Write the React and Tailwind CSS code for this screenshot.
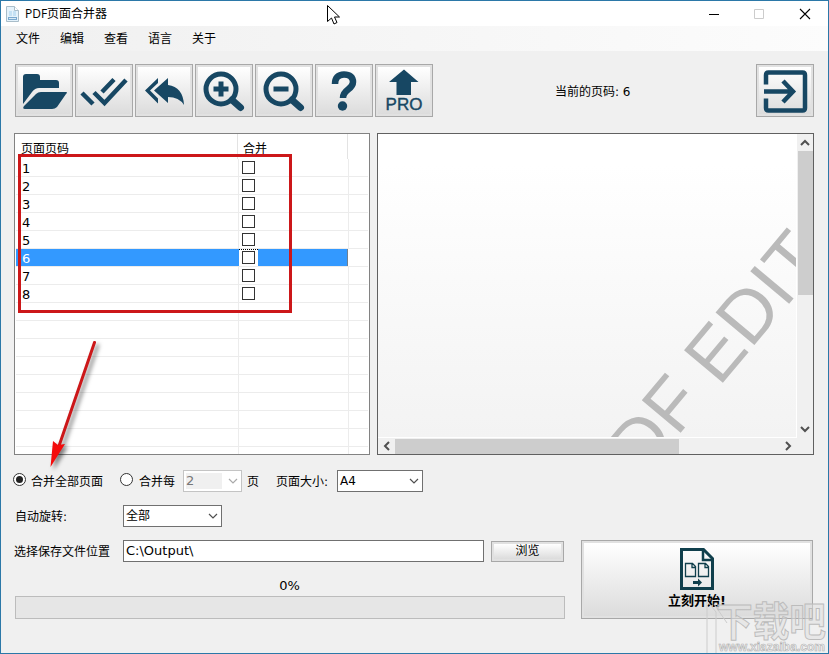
import { useState } from 'react';

const pages = [1, 2, 3, 4, 5, 6, 7, 8];
const menus = ['文件', '编辑', '查看', '语言', '关于'];

const NAVY = '#174763';

const Icon = ({ children }) => (
  <svg width="58" height="53" viewBox="0 0 58 53" fill={NAVY} className="block">
    {children}
  </svg>
);

const OpenIcon = () => (
  <Icon>
    <path d="M8 13q0-3 3-3h11q3 0 3 3v3h16q3 0 3 3v5H24q-4 0-7 4L8 40z" />
    <path d="M51 28H26q-3 0-5 2L9 42q-2 3 1 3h27q3 0 5-2l9-13q2-2 0-2z" />
  </Icon>
);

const CheckAllIcon = () => (
  <Icon>
    <path
      d="M7 29l11 11M19 28.500l10.500 10.500 21.500-23M27 28l12-12.500"
      fill="none"
      stroke={NAVY}
      strokeWidth="4.500"
    />
  </Icon>
);

const ReplyAllIcon = () => (
  <Icon>
    <path d="M23 14v5l-8 7.500 8 8v5L10 26.500z" />
    <path d="M33 14v7q15 2 16 20-5-8-16-8v6L19 26.500z" />
  </Icon>
);

const Magnifier = () => (
  <>
    <circle cx="26" cy="25" r="15" fill="none" stroke={NAVY} strokeWidth="5" />
    <path d="M37 36l8.500 7.500" stroke={NAVY} strokeWidth="7" strokeLinecap="round" />
    <path d="M18.500 22.500h15v5h-15z" />
  </>
);

const ZoomInIcon = () => (
  <Icon>
    <Magnifier />
    <path d="M23.500 17.500h5v15h-5z" />
  </Icon>
);

const ZoomOutIcon = () => (
  <Icon>
    <Magnifier />
  </Icon>
);

const HelpIcon = () => (
  <Icon>
    <path
      d="M20 20c0-6 3-9.500 9-9.500s9 3 9 7.500c0 8-10 7-10 16"
      fill="none"
      stroke={NAVY}
      strokeWidth="6.500"
    />
    <circle cx="27.500" cy="42" r="4.700" />
  </Icon>
);

const ProIcon = () => (
  <Icon>
    <path d="M29 5.500L43.500 18H36v13H21.500V18H14z" />
    <text x="29" y="46" textAnchor="middle" fontSize="17" fontFamily="Liberation Sans, sans-serif" textLength="37" stroke={NAVY} strokeWidth=".4">
      PRO
    </text>
  </Icon>
);

const ExitIcon = () => (
  <Icon>
    <path
      d="M10 20.500V11q0-2.500 2.500-2.500h34Q49 8.500 49 11v33q0 2.500-2.500 2.500h-34Q10 46.500 10 44V34.500"
      fill="none"
      stroke={NAVY}
      strokeWidth="4.500"
    />
    <path d="M8 27.500h29M27 17l10 10.500L27 38" fill="none" stroke={NAVY} strokeWidth="4.500" />
  </Icon>
);

const ToolButton = ({ children }) => (
  <button className="h-[53px] w-[58px] shrink-0 border border-[#a8a8a8] bg-[#e1e1e1] p-[2px]">
    <span className="flex h-full w-full items-center justify-center bg-linear-to-b from-white to-[#dcdcdc]">
      <span className="-m-2 shrink-0">{children}</span>
    </span>
  </button>
);

const Chevron = ({ direction = 'down', color = '#505050', width = 1.2 }) => {
  const paths = {
    down: 'M1 3l4 4 4-4',
    up: 'M1 7l4-4 4 4',
    left: 'M7 1L3 5l4 4',
    right: 'M3 1l4 4-4 4',
  };
  return (
    <svg width="10" height="10" viewBox="0 0 10 10" fill="none" stroke={color} strokeWidth={width} className="shrink-0">
      <path d={paths[direction]} />
    </svg>
  );
};

const Select = ({ value, className }) => (
  <div className={`flex h-[22px] items-center justify-between border border-[#707070] bg-white pr-[3px] pl-[2px] ${className}`}>
    <span className="whitespace-nowrap">{value}</span>
    <Chevron />
  </div>
);

const TitleBar = () => (
  <header className="flex h-[25px] shrink-0 items-center bg-white">
    <svg width="13" height="16" viewBox="0 0 13 16" className="ml-[5px]">
      <path d="M.5.5h8l4 4v11H.5z" fill="#e4f2fb" stroke="#a9bdc9" />
      <path d="M8.500.5v4h4" fill="#fff" stroke="#a9bdc9" />
      <path d="M3 5h3v5H3zM7 5h3v5H7z" fill="#c4e1f4" />
      <path d="M2 11h9v3H2z" fill="#7aa9cf" />
      <path d="M3 12.500h7" stroke="#d7e9f5" />
    </svg>
    <h1 className="ml-[6px] font-['Open_Sans','Noto_Sans_CJK_SC',sans-serif] text-[12px] leading-4">PDF页面合并器</h1>
    <svg width="102" height="12" viewBox="0 0 102 12" fill="none" className="mr-[17px] ml-auto">
      <path d="M0 6.500h10" stroke="#000" />
      <path d="M45.500 1.500h9v9h-9z" stroke="#ccc" />
      <path d="M91 1l10 10M101 1L91 11" stroke="#000" strokeWidth="1.100" />
    </svg>
  </header>
);

const PageTable = ({ selected, onSelect }) => (
  <section className="flex h-[322px] w-[356px] shrink-0 flex-col overflow-hidden border border-[#828282] bg-white pl-px">
    <div className="flex h-[25px] shrink-0">
      <div className="w-[222px] border-r border-[#e3e3e3] pt-[6px] pl-[5px] leading-[18px]">页面页码</div>
      <div className="w-[110px] border-r border-[#e3e3e3] pt-[6px] pl-[5px] leading-[18px]">合并</div>
    </div>
    {Array.from({ length: 17 }, (_, i) => {
      const page = pages[i];
      const active = page === selected;
      return (
        <div key={i} onClick={() => page && onSelect(page)} className="mr-px flex h-[18px] shrink-0 border-b border-[#ececec]">
          <div
            className={`w-[223px] border-r pl-[6px] text-[13px] leading-[20px] ${
              active ? 'border-[#3399ff] bg-[#3399ff] text-white' : 'border-[#ececec]'
            }`}
          >
            {page}
          </div>
          <div className={`border-r ${active ? 'w-[109px] border-[#708090] bg-[#3399ff]' : 'w-[110px] border-[#ececec]'}`}>
            {page && (
              <div className={`flex h-full w-[19px] pl-[3px] ${active ? 'border-t border-dotted border-black bg-white pt-px' : 'pt-[2px]'}`}>
                <span className="h-[13px] w-[13px] border border-[#333] bg-white" />
              </div>
            )}
          </div>
        </div>
      );
    })}
  </section>
);

const Preview = () => (
  <section className="ml-[7px] grid h-[322px] w-[437px] grid-cols-[419px_16px] grid-rows-[304px_16px] border border-[#606060] bg-[#f0f0f0]">
    <div className="overflow-hidden border-r border-b border-white bg-linear-to-b from-white from-10% to-[#f3f3f3]">
      <svg width="418" height="303" viewBox="0 0 418 303">
        <text
          transform="translate(233 382) rotate(-50)"
          fontSize="73.7"
          fontFamily="Liberation Sans, sans-serif"
          fill="#bababa"
        >
          PDF EDITOR
        </text>
      </svg>
    </div>
    <div className="flex flex-col items-center">
      <div className="flex h-[17px] items-center">
        <Chevron direction="up" width={2} />
      </div>
      <div className="h-[144px] w-[15px] bg-[#cdcdcd]" />
      <div className="mt-auto flex h-[19px] items-center">
        <Chevron width={2} />
      </div>
    </div>
    <div className="flex items-center">
      <div className="flex w-[17px] justify-center">
        <Chevron direction="left" width={2} />
      </div>
      <div className="h-[15px] w-[284px] bg-[#cdcdcd]" />
      <div className="ml-auto flex w-[19px] justify-center">
        <Chevron direction="right" width={2} />
      </div>
    </div>
    <div />
  </section>
);

const MergeIcon = () => (
  <svg width="34" height="42" viewBox="0 0 34 42" fill="none" stroke="#103f4c">
    <path d="M1.500 1.500h22l9 9v30h-31z" strokeWidth="3" />
    <path d="M23 2v10h10" strokeWidth="2.500" />
    <path d="M5.500 15.500h7l3 3v10h-10zM12 15.500v4h3.500M18.500 15.500h7l3 3v10h-10zM25 15.500v4h3.500" strokeWidth="1.300" />
    <path d="M13 33h5v-2.500l4 4-4 4V36h-5z" fill="#103f4c" stroke="none" />
  </svg>
);

const Radio = ({ checked }) => (
  <span className="mb-[3px] flex h-[13px] w-[13px] shrink-0 items-center justify-center rounded-full border border-[#333] bg-white">
    {checked && <span className="h-[7px] w-[7px] rounded-full bg-[#222]" />}
  </span>
);

const SiteMark = () => (
  <svg width="123" height="58" viewBox="0 0 123 58" className="pointer-events-none absolute -right-px -bottom-px">
    <path d="M1 5l9 11v42M1 5v53M8 8l13 19" fill="none" stroke="#cccccc" />
    <text
      x="10"
      y="40"
      fontSize="40"
      fontWeight="700"
      fontFamily="Noto Sans CJK SC, sans-serif"
      fill="#dedede"
      fillOpacity=".5"
      stroke="#bcbcbc"
      textLength="110"
      lengthAdjust="spacingAndGlyphs"
    >
      下载吧
    </text>
    <text
      x="13"
      y="55"
      fontSize="12"
      fontWeight="700"
      fontFamily="Liberation Sans, sans-serif"
      fill="#f4f4f4"
      stroke="#b0b0b0"
      strokeWidth=".6"
      textLength="106"
      lengthAdjust="spacingAndGlyphs"
    >
      www.xiazaiba.com
    </text>
  </svg>
);

const Annotations = () => (
  <svg width="829" height="654" viewBox="0 0 829 654" fill="none" className="pointer-events-none absolute -top-px -left-px">
    <rect x="19.500" y="155.500" width="271" height="156" stroke="#cc1719" strokeWidth="3" />
    <g className="drop-shadow-[3px_3px_2px_rgba(0,0,0,0.5)]">
      <path d="M94.500 342.500L59 446" stroke="#cc1719" strokeWidth="3" strokeLinecap="round" />
      <path d="M50.500 467L53 441l5 4 7-1z" fill="#f40b0b" />
    </g>
    <path d="M327.500 5.500v16l4-3.500 2.500 6 3-1.500-2.500-5.500h5z" fill="#fff" stroke="#000" />
  </svg>
);

export default function App() {
  const [selected, setSelected] = useState(6);

  return (
    <div className="relative flex h-[654px] w-[829px] flex-col overflow-hidden border border-[#2b78a8] bg-[#f0f0f0] font-['DejaVu_Sans','Noto_Sans_CJK_SC',sans-serif] text-[12px] text-black">
      <TitleBar />
      <nav className="flex h-[25px] shrink-0 items-center gap-5 bg-linear-to-r from-[#f0f0f0] to-[#fcfcfc] pl-[15px]">
        {menus.map((menu) => (
          <span key={menu}>{menu}</span>
        ))}
      </nav>

      <div className="mt-[13px] flex shrink-0 items-center pl-[14px]">
        <div className="flex gap-[2px]">
          <ToolButton><OpenIcon /></ToolButton>
          <ToolButton><CheckAllIcon /></ToolButton>
          <ToolButton><ReplyAllIcon /></ToolButton>
          <ToolButton><ZoomInIcon /></ToolButton>
          <ToolButton><ZoomOutIcon /></ToolButton>
          <ToolButton><HelpIcon /></ToolButton>
          <ToolButton><ProIcon /></ToolButton>
        </div>
        <span className="ml-[122px] w-[201px] pt-[3px]">当前的页码: {selected}</span>
        <ToolButton><ExitIcon /></ToolButton>
      </div>

      <div className="mt-[16px] flex shrink-0 pl-[13px]">
        <PageTable selected={selected} onSelect={setSelected} />
        <Preview />
      </div>

      <div className="mt-[15px] flex h-[22px] shrink-0 items-center pl-[12px]">
        <Radio checked />
        <span className="ml-[5px] w-[89px] pt-[2px]">合并全部页面</span>
        <Radio />
        <span className="ml-[6px] w-[44px] pt-[2px]">合并每</span>
        <div className="flex h-[22px] w-[59px] items-center justify-between border border-[#c4c4c4] bg-white pr-[3px] pl-[2px] text-[13px] text-[#777]">
          <span className="h-4 w-9 bg-[#f0f0f0] leading-4">2</span>
          <Chevron color="#aaa" />
        </div>
        <span className="ml-[5px] w-[29px] pt-[2px]">页</span>
        <span className="w-[61px] pt-[2px] whitespace-nowrap">页面大小:</span>
        <Select value="A4" className="w-[86px]" />
      </div>

      <div className="mt-[13px] flex h-[22px] shrink-0 items-center pl-[14px]">
        <span className="w-[108px] pt-px">自动旋转:</span>
        <Select value="全部" className="w-[99px]" />
      </div>

      <div className="mt-[13px] flex">
        <div className="w-[551px] pl-[13px]">
          <div className="flex h-[22px] items-center">
            <span className="w-[109px] shrink-0 pt-px">选择保存文件位置</span>
            <div className="h-[22px] w-[361px] shrink-0 border border-[#707070] bg-white pl-[2px] text-[13px] leading-5">C:\Output\</div>
            <button className="ml-[7px] h-[21px] w-[73px] shrink-0 border border-[#a8a8a8] bg-[#e1e1e1] p-[2px]">
              <span className="flex h-full items-center justify-center bg-linear-to-b from-white to-[#dcdcdc]">浏览</span>
            </button>
          </div>
          <div className="mt-[14px] h-[20px] w-[551px] text-center text-[13px] leading-5">0%</div>
          <div className="ml-px h-[23px] w-[550px] border border-[#bcbcbc] bg-[#e6e6e6]" />
        </div>
        <button className="ml-[29px] h-[79px] w-[232px] shrink-0 border border-[#a8a8a8] bg-[#e1e1e1] p-[2px]">
          <span className="flex h-full flex-col items-center bg-linear-to-b from-white to-[#dcdcdc] pt-[5px] text-[13px] font-bold">
            <MergeIcon />
            <span className="mt-[3px] leading-4">立刻开始!</span>
          </span>
        </button>
      </div>

      <SiteMark />
      <Annotations />
    </div>
  );
}
